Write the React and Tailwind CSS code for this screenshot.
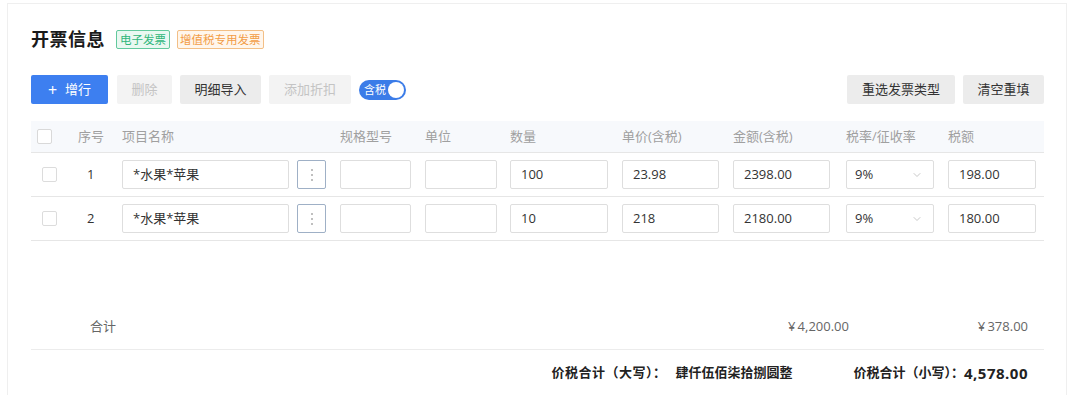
import React from 'react';
import { ChevronDown } from 'lucide-react';

const cols = 'grid grid-cols-[47px_44px_175px_43px_85px_85px_112px_111px_113px_102px_96px] items-center';

const rows = [
  { no: 1, name: '*水果*苹果', qty: '100', price: '23.98', amount: '2398.00', rate: '9%', tax: '198.00' },
  { no: 2, name: '*水果*苹果', qty: '10', price: '218', amount: '2180.00', rate: '9%', tax: '180.00' },
];

function Box({ w, children }) {
  return (
    <div className={`h-[29px] ${w} border border-[#dedede] rounded-[2px] bg-white flex items-center pl-[10px] text-[13px] text-[#333]`}>
      {children}
    </div>
  );
}

function App() {
  return (
    <div className="min-h-screen bg-white pt-[3px] pl-[7px] pr-[13px] font-['Open_Sans','Noto_Sans_CJK_SC',sans-serif]">
      <div className="border border-[#efefef] border-b-0 min-h-[392px] pl-[23px] pr-[22px]">
        {/* title */}
        <div className="flex items-center h-[26px] mt-[22px]">
          <h1 className="text-[18px] font-bold text-[#1a1a1a] tracking-[0.5px]">开票信息</h1>
          <span className="ml-[11px] h-[19px] px-[3px] border border-[#62c99d] bg-[#e9f8f1] text-[#2fb67a] text-[11.5px] leading-[17px] rounded-[2px]">电子发票</span>
          <span className="ml-[7px] h-[19px] px-[2px] border border-[#f3bf86] bg-[#fff6ec] text-[#f29c45] text-[11.5px] leading-[17px] rounded-[2px]">增值税专用发票</span>
        </div>

        {/* toolbar */}
        <div className="flex items-center mt-[23px] text-[13px]">
          <button className="w-[77px] h-[29px] bg-[#3d7ff0] text-white rounded-[2px] flex items-center justify-center gap-[8px]">
            <span className="text-[16px] leading-none">+</span>增行
          </button>
          <button className="ml-[9px] w-[55px] h-[29px] bg-[#f3f3f3] text-[#c4c4c4] rounded-[2px]">删除</button>
          <button className="ml-[8px] w-[81px] h-[29px] bg-[#ececec] text-[#333] rounded-[2px]">明细导入</button>
          <button className="ml-[8px] w-[82px] h-[29px] bg-[#f3f3f3] text-[#c4c4c4] rounded-[2px]">添加折扣</button>
          <div className="ml-[8px] w-[47px] h-[20px] rounded-full bg-[#3b7ce8] flex items-center justify-between pl-[5px] pr-[2px]">
            <span className="text-[11px] text-white leading-none">含税</span>
            <span className="w-[16px] h-[16px] rounded-full bg-white"></span>
          </div>
          <div className="flex-1"></div>
          <button className="w-[108px] h-[29px] bg-[#ececec] text-[#333] rounded-[2px]">重选发票类型</button>
          <button className="ml-[8px] w-[81px] h-[29px] bg-[#ececec] text-[#333] rounded-[2px]">清空重填</button>
        </div>

        {/* table header */}
        <div className={`${cols} mt-[17px] h-[32px] bg-[#f7f9fc] border-b border-[#e6e6e6] text-[13px] text-[#a0a0a0]`}>
          <div className="pl-[6px]"><div className="w-[15px] h-[15px] border border-[#d9d9d9] bg-white rounded-[2px]"></div></div>
          <div>序号</div>
          <div className="col-span-2">项目名称</div>
          <div>规格型号</div>
          <div>单位</div>
          <div>数量</div>
          <div>单价(含税)</div>
          <div>金额(含税)</div>
          <div>税率/征收率</div>
          <div>税额</div>
        </div>

        {rows.map((r) => (
          <div key={r.no} className={`${cols} h-[44px] border-b border-[#e6e6e6]`}>
            <div className="pl-[11px]"><div className="w-[15px] h-[15px] border border-[#dcdcdc] bg-white rounded-[2px]"></div></div>
            <div className="pl-[9px] text-[13px] text-[#333]">{r.no}</div>
            <Box w="w-[167px]">{r.name}</Box>
            <div className="w-[29px] h-[29px] border border-[#9fb0c6] rounded-[2px] flex flex-col items-center justify-center gap-[3px]">
              <span className="w-[2px] h-[2px] rounded-full bg-[#aaa]"></span>
              <span className="w-[2px] h-[2px] rounded-full bg-[#aaa]"></span>
              <span className="w-[2px] h-[2px] rounded-full bg-[#aaa]"></span>
            </div>
            <Box w="w-[71px]"></Box>
            <Box w="w-[72px]"></Box>
            <Box w="w-[98px]">{r.qty}</Box>
            <Box w="w-[97px]">{r.price}</Box>
            <Box w="w-[97px]">{r.amount}</Box>
            <div className="h-[29px] w-[88px] border border-[#dedede] rounded-[2px] bg-white flex items-center justify-between pl-[8px] pr-[10px] text-[13px] text-[#333]">
              {r.rate}
              <ChevronDown size={12} strokeWidth={1.5} className="text-[#b5b5b5]" />
            </div>
            <Box w="w-[88px]">{r.tax}</Box>
          </div>
        ))}

        {/* totals */}
        <div className={`${cols} mt-[64px] h-[45px] border-b border-[#ececec] text-[13px] text-[#666]`}>
          <div></div>
          <div className="col-span-2 pl-[12px]">合计</div>
          <div className="col-span-5"></div>
          <div className="text-right -mr-[3px]">¥&thinsp;4,200.00</div>
          <div></div>
          <div className="text-right pr-[16px]">¥&thinsp;378.00</div>
        </div>

        <div className="flex items-center h-[46px] text-[13px] font-bold text-[#222]">
          <div className="flex-1"></div>
          <span className="tracking-[0.5px]">价税合计（大写）：</span>
          <span className="ml-[9px]">肆仟伍佰柒拾捌圆整</span>
          <span className="ml-[61px]">价税合计（小写）：</span>
          <span className="mr-[16px] text-[15px] tracking-[0.5px]">4,578.00</span>
        </div>
      </div>
    </div>
  );
}

export default App;
